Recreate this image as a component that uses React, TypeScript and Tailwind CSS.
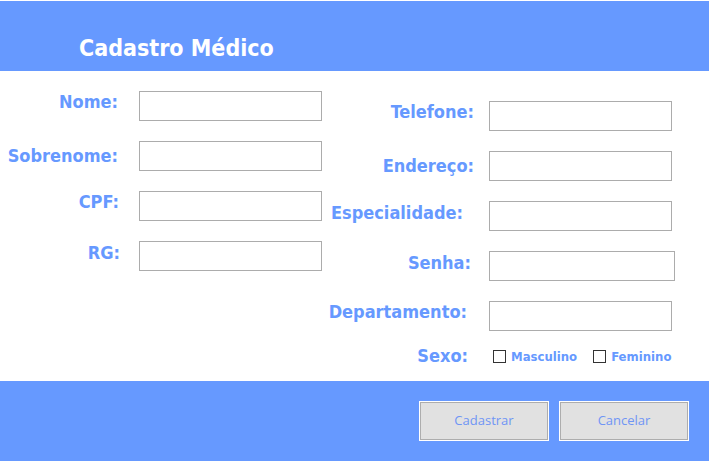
import React from "react";

const font = "font-['DejaVu_Sans_Condensed','DejaVu_Sans',sans-serif]";

type FieldProps = {
  label: string;
  labelBox: string; // width of the label column
  gap: string; // space between label and input
  lift: string; // pulls the label up a little
  inputW?: string;
};

function Field({ label, labelBox, gap, lift, inputW = "w-[183px]" }: FieldProps) {
  return (
    <div className="flex h-[30px] items-center">
      <div className={`${labelBox} flex h-full items-center justify-end ${lift}`}>
        <span className={`${font} [font-stretch:condensed] whitespace-nowrap text-[18px] font-bold leading-none text-[#6699ff]`}>
          {label}
        </span>
      </div>
      <input
        className={`${gap} ${inputW} h-[30px] border border-[#acacac] bg-white outline-none`}
      />
    </div>
  );
}

function Check({ label }: { label: string }) {
  return (
    <label className="flex items-center gap-[5px]">
      <span className="block h-[13px] w-[13px] border border-[#333] bg-white" />
      <span className={`${font} [font-stretch:condensed] text-[13px] font-bold leading-none text-[#6699ff]`}>
        {label}
      </span>
    </label>
  );
}

function FormButton({ children }: { children: React.ReactNode }) {
  return (
    <button className="h-[40px] w-[130px] border border-white">
      <span className="flex h-full w-full items-center justify-center border border-[#adadad] bg-[#e1e1e1] font-['Open_Sans',sans-serif] text-[13px] text-[#6f95f5]">
        {children}
      </span>
    </button>
  );
}

export default function App() {
  return (
    <div className="h-[461px] w-[709px] overflow-hidden bg-white pt-[1px]">
      {/* Header */}
      <header className="flex h-[70px] items-center bg-[#6699ff] pl-[79px] pt-[24px]">
        <h1 className={`${font} [font-stretch:condensed] text-[23px] font-bold leading-none text-white`}>
          Cadastro Médico
        </h1>
      </header>

      {/* Form */}
      <main className="flex h-[310px]">
        <div className="flex w-[322px] flex-col gap-[20px] pt-[20px]">
          <Field label="Nome:" labelBox="w-[118px]" gap="ml-[21px]" lift="pb-[8px]" />
          <Field label="Sobrenome:" labelBox="w-[118px]" gap="ml-[21px]" lift="pb-0" />
          <Field label="CPF:" labelBox="w-[119px]" gap="ml-[20px]" lift="pb-[8px]" />
          <Field label="RG:" labelBox="w-[120px]" gap="ml-[19px]" lift="pb-[6px]" />
        </div>

        <div className="flex flex-col gap-[20px] pt-[30px]">
          <Field label="Telefone:" labelBox="w-[152px]" gap="ml-[15px]" lift="pb-[8px]" />
          <Field label="Endereço:" labelBox="w-[152px]" gap="ml-[15px]" lift="pb-0" />
          <Field label="Especialidade:" labelBox="w-[141px]" gap="ml-[26px]" lift="pb-[6px]" />
          <Field label="Senha:" labelBox="w-[149px]" gap="ml-[18px]" lift="pb-[6px]" inputW="w-[186px]" />
          <Field label="Departamento:" labelBox="w-[145px]" gap="ml-[22px]" lift="pb-[8px]" />

          <div className="-mt-[10px] flex h-[30px] items-center">
            <div className="flex w-[146px] justify-end">
              <span className={`${font} [font-stretch:condensed] text-[18px] font-bold leading-none text-[#6699ff]`}>
                Sexo:
              </span>
            </div>
            <div className="ml-[25px] flex items-center gap-[16px]">
              <Check label="Masculino" />
              <Check label="Feminino" />
            </div>
          </div>
        </div>
      </main>

      {/* Footer */}
      <footer className="flex h-[80px] items-start justify-end gap-[10px] bg-[#6699ff] pr-[20px] pt-[20px]">
        <FormButton>Cadastrar</FormButton>
        <FormButton>Cancelar</FormButton>
      </footer>
    </div>
  );
}
